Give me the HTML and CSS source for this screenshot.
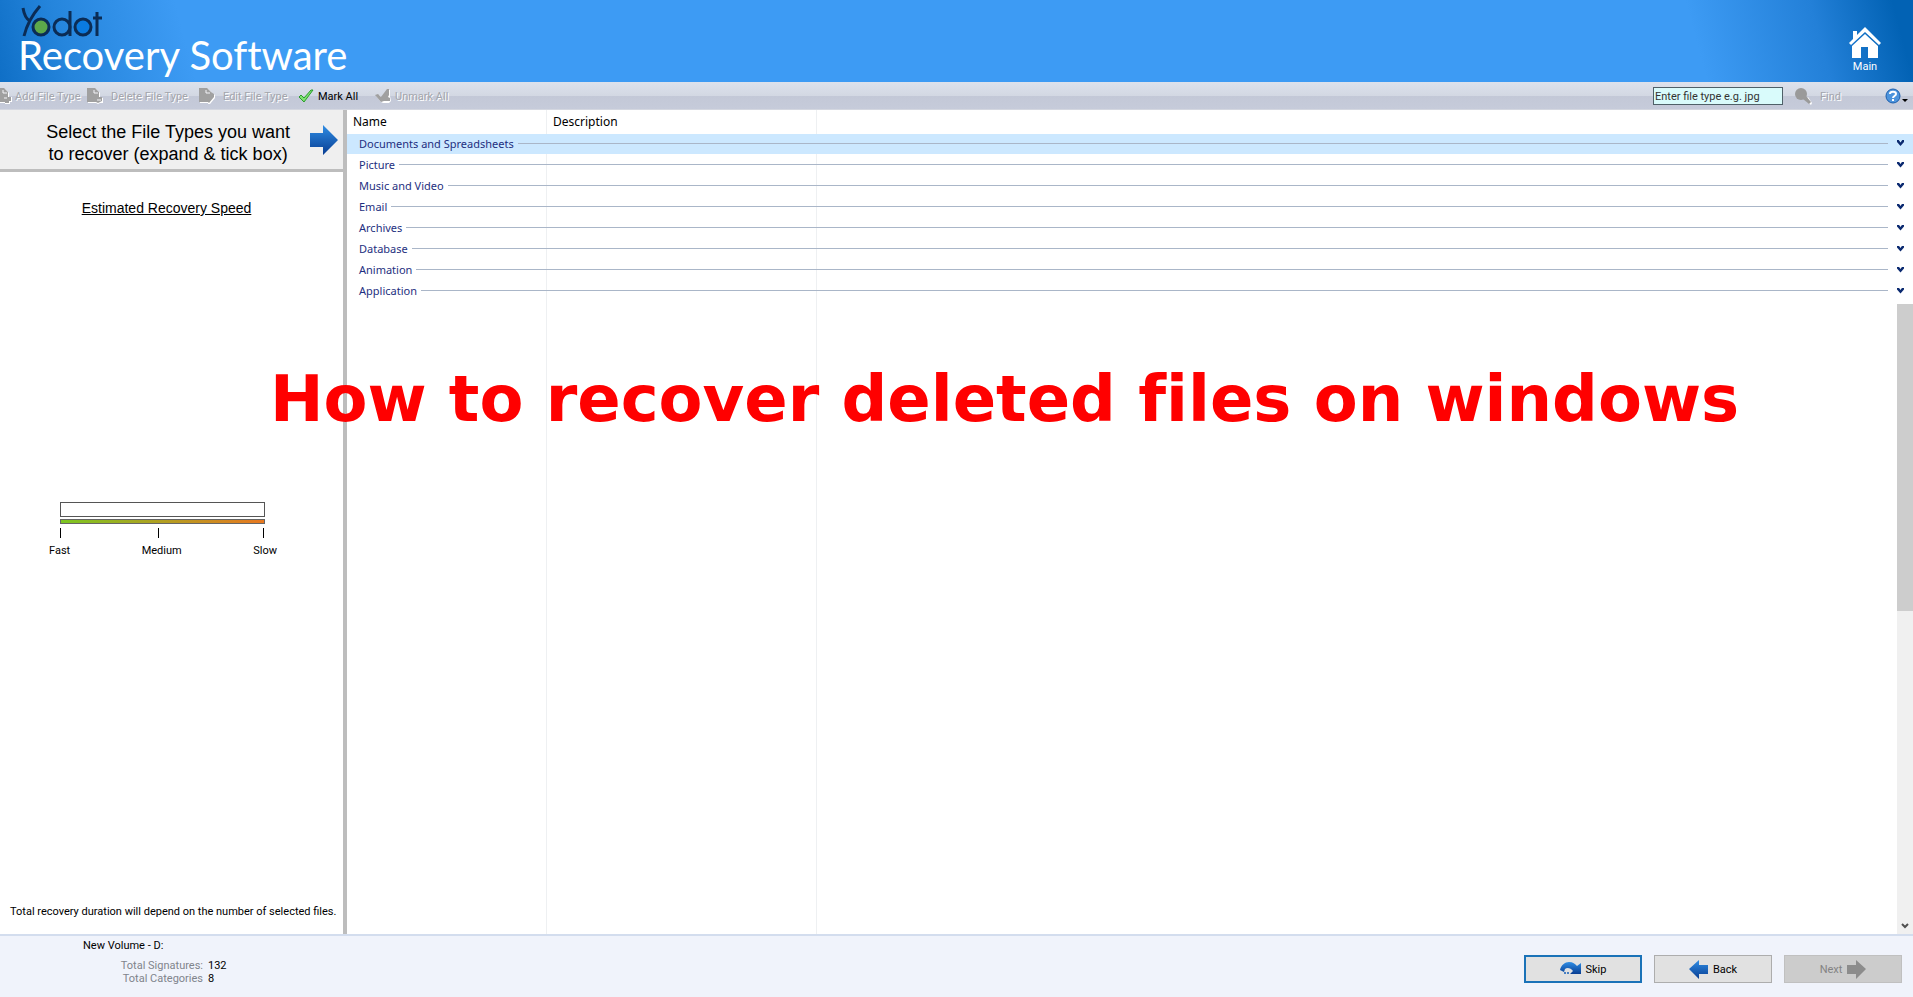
FILE: index.html
```html
<!DOCTYPE html>
<html lang="en">
<head>
  <meta charset="UTF-8" />
  <meta name="viewport" content="width=device-width, initial-scale=1.0" />
  <title>Yodot Recovery Software</title>
  <link rel="stylesheet" href="styles.css">
</head>
<body>
  <header class="banner">
    <div class="brand">
      <svg class="yodot" width="84" height="34" viewBox="0 0 84 34" role="img" aria-label="Yodot">
        <circle cx="21" cy="22" r="8" fill="#5da84a" />
        <circle cx="63" cy="22" r="7" fill="#0a7be0" />
        <g fill="none" stroke="#0b2c55" stroke-width="3">
          <path d="M3 3 C4 9 6 14 10 16 M20 1 C13 9 7 19 4 31" />
          <circle cx="21" cy="22" r="8" />
          <circle cx="42" cy="22" r="8" />
          <path d="M50 6 V31" />
          <circle cx="63" cy="22" r="8" />
          <path d="M77 7 V31 M73 13 H82" />
        </g>
      </svg>
      <h1 class="product">Recovery Software</h1>
    </div>
    <a class="mainLink" href="#main">
      <svg width="32" height="31" viewBox="0 0 32 31" fill="#fff">
        <path d="M16 0 L0 16 L2 18 L16 5 L30 18 L32 16 Z M4 4 H8 V8 L4 12 Z" />
        <path d="M16 7 L3 19 V31 H12 V20 H19 V31 H29 V19 Z" />
      </svg>
      Main
    </a>
  </header>

  <nav class="toolbar">
    <button class="tool first" disabled>
      <svg width="16" height="16" viewBox="0 0 16 16">
        <path d="M1 1 H9 L13 5 V9 H16 V14 H14 V16 H9 V15 H1 Z" fill="#fff" />
        <path d="M0 0 H8 L12 4 V9 H15 V13 H13 V15 H9 V14 H0 Z" fill="#a0a0a0" />
        <path d="M7 2 V5 H11 M8 10 H11" fill="none" stroke="#f4f4f8" />
      </svg>
      Add File Type
    </button>
    <button class="tool del" disabled>
      <svg width="16" height="16" viewBox="0 0 16 16">
        <path d="M1 1 H9 L13 5 V10 H16 V15 H13 L11 16 L9 15 H1 Z" fill="#fff" />
        <path d="M0 0 H8 L12 4 V9 H15 V13 L11 15 L9 14 H0 Z" fill="#a0a0a0" />
        <path d="M7 2 V5 H11 M10 12 H14" fill="none" stroke="#f4f4f8" />
      </svg>
      Delete File Type
    </button>
    <button class="tool edit" disabled>
      <svg width="16" height="16" viewBox="0 0 16 16">
        <path d="M1 1 H9 L13 5 L16 7 V10 L11 16 H9 V15 H1 Z" fill="#fff" />
        <path d="M0 0 H8 L12 4 L15 6 V9 L10 15 L9 14 H0 Z" fill="#a0a0a0" />
        <path d="M7 2 V5 H11" fill="none" stroke="#f4f4f8" />
      </svg>
      Edit File Type
    </button>
    <button class="tool mark">
      <svg width="16" height="14" viewBox="0 0 16 14"><path d="M1 8 L3 6 L6 9 L13 1 L15 1 L6 13 Z" fill="#7de070" stroke="#2a9c2c" /></svg>
      Mark All
    </button>
    <button class="tool unmark" disabled>
      <svg width="16" height="14" viewBox="0 0 16 14">
        <path d="M1 7 L4 6 L7 9 L13 1 H15 V7 L16 12 L14 14 H8 L6 13 Z" fill="#fff" />
        <path d="M0 6 L3 5 L6 8 L12 0 H14 V6 L13 8 L15 9 V12 H9 L6 13 Z" fill="#a0a0a0" />
      </svg>
      Unmark All
    </button>
    <input class="search" type="text" aria-label="File type" value="Enter file type e.g. jpg">
    <button class="tool find" disabled>
      <svg width="17" height="17" viewBox="0 0 17 17">
        <path d="M10 12 L13 9 L17 15 L16 17 Z" fill="#fff" />
        <g fill="#9a9a9a"><circle cx="6" cy="6" r="6" /><path d="M8 11 L11 8 L16 14 L14 16 Z" /></g>
      </svg>
      Find
    </button>
    <button class="help" aria-label="Help">
      <svg width="23" height="16" viewBox="0 0 23 16">
        <circle cx="8" cy="8" r="7" fill="#4d94dc" stroke="#1c5fae" />
        <path d="M5 6 C5 3 11 3 11 6 C11 8 8 8 8 10 M8 11 V13" fill="none" stroke="#fff" stroke-width="2" />
        <path d="M17 11 H23 L20 14 Z" fill="#000" />
      </svg>
    </button>
  </nav>

  <div class="content">
    <aside class="side">
      <div class="step">
        <h2>Select the File Types you want<br>to recover (expand &amp; tick box)</h2>
        <svg width="28" height="30" viewBox="0 0 28 30">
          <defs>
            <linearGradient id="blue" x1="0" y1="0" x2="0" y2="1">
              <stop offset="0" stop-color="#2f8de4" />
              <stop offset="1" stop-color="#083d92" />
            </linearGradient>
          </defs>
          <path d="M0 8 H13 V0 L28 15 L13 30 V22 H0 Z" fill="url(#blue)" />
        </svg>
      </div>
      <p class="speedTitle">Estimated Recovery Speed</p>
      <div class="speed">
        <div class="meter"></div>
        <div class="scale"></div>
        <div class="ticks"><i></i><i></i><i></i></div>
        <div class="labels"><span>Fast</span><span>Medium</span><span>Slow</span></div>
      </div>
      <p class="note">Total recovery duration will depend on the number of selected files.</p>
    </aside>

    <main class="list">
      <div class="head">
        <span class="name">Name</span>
        <span class="desc">Description</span>
      </div>
      <ul class="groups">
        <li class="selected"><span>Documents and Spreadsheets</span></li>
        <li><span>Picture</span></li>
        <li><span>Music and Video</span></li>
        <li><span>Email</span></li>
        <li><span>Archives</span></li>
        <li><span>Database</span></li>
        <li><span>Animation</span></li>
        <li><span>Application</span></li>
      </ul>
      <div class="scrollbar">
        <div class="thumb"></div>
        <svg width="8" height="7" viewBox="0 0 8 7"><path d="M1 1 L4 4 L7 1" fill="none" stroke="#505050" stroke-width="2" /></svg>
      </div>
    </main>
  </div>

  <footer class="status">
    <div class="info">
      <p class="volume">New Volume - D:</p>
      <dl>
        <dt>Total Signatures:</dt><dd>132</dd>
        <dt>Total Categories</dt><dd>8</dd>
      </dl>
    </div>
    <div class="actions">
      <button class="btn skip">
        <svg width="21" height="14" viewBox="0 0 21 14"><path d="M0 8 C1 3 5 0 9 0 C13 0 15 2 17 4 L21 1 V12 H10 L13 9 C11 6 7 5 5 7 L4 10 Z" fill="url(#blue)" /><circle cx="5" cy="11" r="1" fill="#145fb8" /><circle cx="8" cy="11" r="1" fill="#145fb8" /></svg>
        Skip
      </button>
      <button class="btn">
        <svg width="19" height="19" viewBox="0 0 19 19"><path d="M0 9 L10 0 V5 H19 V14 H10 V19 Z" fill="url(#blue)" /></svg>
        Back
      </button>
      <button class="btn next" disabled>
        Next
        <svg width="19" height="19" viewBox="0 0 19 19"><path d="M19 9 L9 0 V5 H0 V14 H9 V19 Z" fill="#8c8c8c" /></svg>
      </button>
    </div>
  </footer>

  <div class="caption">How to recover deleted files on windows</div>
</body>
</html>
```
FILE: styles.css
```css
* {
  box-sizing: border-box;
}

html, body {
  margin: 0;
  padding: 0;
  height: 100vh;
  overflow: hidden;
  background: #fff;
  color: #000;
  font-family: Roboto, "Liberation Sans", Arial, sans-serif;
  font-size: 11px;
}

body {
  display: flex;
  flex-direction: column;
}

h1, h2, p, ul, dl, dd {
  margin: 0;
  padding: 0;
  font-weight: normal;
}

button {
  font: inherit;
  color: inherit;
}

svg {
  display: block;
  flex: none;
}

.banner {
  display: flex;
  justify-content: space-between;
  height: 82px;
  padding: 5px 32px 0 18px;
  background: linear-gradient(75deg, #0f6fc6 0, #2585dc 70px, #3d9bf4 190px, #3d9bf4 calc(100% - 220px), #2380d8 calc(100% - 100px), #0262b4 calc(100% - 20px));
  color: #fff;
}

.yodot {
  margin-left: 2px;
}

.product {
  font-family: Lato, "Century Gothic", sans-serif;
  font-size: 40px;
  line-height: 32px;
  font-variant-ligatures: none;
  white-space: nowrap;
}

.mainLink {
  display: flex;
  flex-direction: column;
  align-items: center;
  padding-top: 22px;
  color: #fff;
  line-height: 18px;
  text-decoration: none;
}

.toolbar {
  display: flex;
  align-items: center;
  height: 28px;
  padding: 1px 5px 0 0;
  background: linear-gradient(#dde2ec, #d3d8e3 50%, #c3c8d7 51%, #c6cbda);
  border-bottom: 1px solid #d4d7e0;
}

.tool, .help {
  display: flex;
  align-items: center;
  padding: 0;
  border: 0;
  background: none;
  white-space: nowrap;
}

.tool:disabled {
  color: #a3a5ac;
  text-shadow: 1px 1px 0 #fff;
}

.first { gap: 3px; width: 91px; margin-left: -4px; }
.del { gap: 8px; width: 112px; }
.edit { gap: 8px; width: 99px; }
.mark { gap: 4px; width: 77px; }
.unmark { gap: 4px; }

.search {
  width: 130px;
  height: 18px;
  margin-left: auto;
  padding: 0 1px;
  border: 1px solid #4f6068;
  background: #d9fbfb;
  color: #333;
  font: inherit;
}

.find { gap: 8px; margin: 0 44px 0 12px; }

.content {
  display: flex;
  flex: 1;
  min-height: 0;
}

.side {
  display: flex;
  flex-direction: column;
  width: 347px;
  border-right: 4px solid #bdbdbd;
  background: #fff;
}

.step {
  display: flex;
  align-items: center;
  justify-content: flex-end;
  gap: 20px;
  height: 62px;
  padding-right: 5px;
  border-bottom: 3px solid #bdbdbd;
  background: #efefef;
}

.step h2 {
  padding-top: 6px;
  font-family: "Liberation Sans", Arial, sans-serif;
  font-size: 18px;
  line-height: 22px;
  text-align: center;
}

.speedTitle {
  margin: 28px 10px 0 0;
  font-family: "Liberation Sans", Arial, sans-serif;
  font-size: 14px;
  line-height: 16px;
  text-align: center;
  text-decoration: underline;
}

.speed {
  width: 228px;
  margin: 286px 0 0 49px;
}

.meter {
  height: 15px;
  margin: 0 12px 2px 11px;
  border: 1px solid #555;
}

.scale {
  height: 5px;
  margin: 0 12px 4px 11px;
  border: 1px solid #666;
  background: linear-gradient(90deg, #7cc622, #e87820);
}

.ticks {
  display: grid;
  grid-template-columns: 98fr 105fr 1px;
  margin: 0 13px 6px 11px;
}

.ticks i {
  width: 1px;
  height: 10px;
  background: #000;
}

.labels {
  display: flex;
  justify-content: space-between;
  line-height: 14px;
}

.note {
  margin-top: auto;
  padding: 0 10px 15px;
  line-height: 14px;
  white-space: nowrap;
}

.list {
  position: relative;
  flex: 1;
  font-family: "Noto Sans", "Segoe UI", sans-serif;
  font-size: 12px;
  background: linear-gradient(#eef0f2, #eef0f2) 199px 0 / 1px 100% no-repeat, linear-gradient(#eef0f2, #eef0f2) 469px 0 / 1px 100% no-repeat;
}

.head {
  display: flex;
  height: 24px;
  padding-left: 6px;
  line-height: 24px;
}

.name {
  width: 200px;
}

.groups {
  list-style: none;
  color: #1e2f80;
  font-size: 11px;
}

.groups li {
  display: flex;
  align-items: center;
  gap: 4px;
  height: 21px;
  padding: 0 9px 2px 12px;
}

.groups li::before {
  content: "";
  order: 1;
  flex: 1;
  height: 1px;
  margin-right: 5px;
  background: #aab6c8;
}

.groups li::after {
  content: "";
  order: 2;
  width: 7px;
  height: 6px;
  background: #0b2a70;
  clip-path: polygon(0 0, 25% 0, 50% 40%, 75% 0, 100% 0, 100% 35%, 50% 100%, 0 35%);
}

.groups .selected {
  height: 20px;
  margin-bottom: 1px;
  background: #cce8ff;
}

.scrollbar {
  position: absolute;
  top: 194px;
  right: 0;
  bottom: 0;
  display: flex;
  flex-direction: column;
  align-items: center;
  justify-content: space-between;
  width: 16px;
  padding-bottom: 4px;
  background: #f0f0f0;
}

.thumb {
  width: 16px;
  height: 49%;
  background: #cdcdcd;
}

.status {
  display: flex;
  justify-content: space-between;
  height: 63px;
  padding: 0 11px 0 83px;
  border-top: 2px solid #d3ddee;
  background: #f0f3fb;
}

.info {
  padding-top: 2px;
}

.volume {
  margin-bottom: 5px;
  line-height: 16px;
}

.info dl {
  display: grid;
  grid-template-columns: 120px auto;
  column-gap: 5px;
  line-height: 13px;
}

.info dt {
  color: #80848c;
  text-align: right;
}

.actions {
  display: flex;
  gap: 12px;
  padding-top: 19px;
}

.btn {
  display: flex;
  align-items: center;
  justify-content: center;
  gap: 5px;
  width: 118px;
  height: 28px;
  padding: 0;
  border: 1px solid #adadad;
  background: #e1e1e1;
}

.skip {
  border: 2px solid #1a72b8;
}

.next {
  border-color: #c0c0c0;
  background: #cccccc;
  color: #838383;
}

.caption {
  position: absolute;
  top: 361px;
  left: 50%;
  transform: translateX(-50%);
  margin-left: 48px;
  color: #f00;
  font-family: "DejaVu Sans", Verdana, sans-serif;
  font-size: 64px;
  font-weight: bold;
  font-variant-ligatures: none;
  line-height: 76px;
  white-space: nowrap;
}
```
